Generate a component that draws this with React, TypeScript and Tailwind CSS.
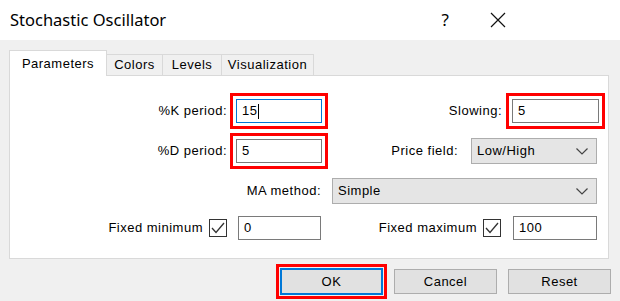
import React from 'react';

const labelCls = 'text-[13px] text-black text-right whitespace-nowrap';

function TextBox({ value, focused, width }: { value: string; focused?: boolean; width: string }) {
  return (
    <div
      className={`${width} h-[24px] bg-white flex items-center pl-[5px] text-[13px] border ${
        focused ? 'border-[#0078d7]' : 'border-[#7a7a7a]'
      }`}
    >
      <span>{value}</span>
      {focused && <span className="ml-px w-px h-[15px] bg-black" />}
    </div>
  );
}

function Highlight({ children, width }: { children: React.ReactNode; width: string }) {
  return <div className={`${width} h-[36px] border-[3px] border-[#ff0000] p-[3px] flex`}>{children}</div>;
}

function Chevron() {
  return (
    <svg width="12" height="7" viewBox="0 0 12 7" className="shrink-0">
      <polyline points="0.5,0.5 6,6 11.5,0.5" fill="none" stroke="#444" strokeWidth="1.2" />
    </svg>
  );
}

function Select({ value, width }: { value: string; width: string }) {
  return (
    <div className={`${width} h-[26px] bg-[#e5e5e5] border border-[#adadad] flex items-center pl-[5px] pr-[8px] text-[13px]`}>
      <span className="flex-1">{value}</span>
      <Chevron />
    </div>
  );
}

function CheckBox() {
  return (
    <div className="w-[18px] h-[18px] border-[1.5px] border-[#333] bg-white flex items-center justify-center">
      <svg width="14" height="12" viewBox="0 0 14 12">
        <polyline points="1,6 5,10.5 13,1" fill="none" stroke="#333" strokeWidth="1.3" />
      </svg>
    </div>
  );
}

function Tab({ label, active, width }: { label: string; active?: boolean; width: string }) {
  if (active) {
    return (
      <div className={`${width} h-[26px] bg-white border border-b-0 border-[#d9d9d9] flex items-center justify-center text-[13px] relative z-10 -mb-px`}>
        {label}
      </div>
    );
  }
  return (
    <div className={`${width} h-[21px] bg-[#f0f0f0] border border-b-0 border-[#d9d9d9] -ml-px flex items-center justify-center text-[13px]`}>
      {label}
    </div>
  );
}

export default function App() {
  return (
    <div
      className="w-[620px] h-[301px] bg-[#f0f0f0] overflow-hidden text-black tracking-[0.5px]"
      style={{ fontFamily: '"Liberation Sans", Arial, sans-serif' }}
    >
      <div className="h-[40px] bg-white flex items-center pl-[10px] tracking-normal">
        <span className="text-[16.5px] flex-1" style={{ fontFamily: '"Noto Sans", sans-serif' }}>
          Stochastic Oscillator
        </span>
        <span className="text-[17px] mr-[41px]" style={{ fontFamily: '"Noto Sans", sans-serif' }}>?</span>
        <svg width="16" height="16" viewBox="0 0 16 16" className="mr-[114px]">
          <path d="M1 1 L15 15 M15 1 L1 15" stroke="#111" strokeWidth="1.2" fill="none" />
        </svg>
      </div>

      <div className="ml-[9px] mt-[9px] flex items-end h-[26px]">
        <Tab label="Parameters" active width="w-[98px]" />
        <Tab label="Colors" width="w-[57px]" />
        <Tab label="Levels" width="w-[60px]" />
        <Tab label="Visualization" width="w-[93px]" />
      </div>

      <div className="ml-[9px] w-[600px] h-[184px] bg-white border border-[#d9d9d9] flex flex-col">
        <div className="mt-[17px] flex items-center">
          <div className={`${labelCls} w-[217px]`}>%K period:</div>
          <div className="ml-[3px]">
            <Highlight width="w-[98px]">
              <TextBox value="15" focused width="w-full" />
            </Highlight>
          </div>
          <div className={`${labelCls} w-[174px]`}>Slowing:</div>
          <div className="ml-[4px]">
            <Highlight width="w-[99px]">
              <TextBox value="5" width="w-full" />
            </Highlight>
          </div>
        </div>

        <div className="mt-[4px] flex items-center">
          <div className={`${labelCls} w-[217px]`}>%D period:</div>
          <div className="ml-[3px]">
            <Highlight width="w-[98px]">
              <TextBox value="5" width="w-full" />
            </Highlight>
          </div>
          <div className={`${labelCls} w-[130px]`}>Price field:</div>
          <div className="ml-[13px]">
            <Select value="Low/High" width="w-[126px]" />
          </div>
        </div>

        <div className="mt-[9px] flex items-center">
          <div className={`${labelCls} w-[311px]`}>MA method:</div>
          <div className="ml-[11px]">
            <Select value="Simple" width="w-[265px]" />
          </div>
        </div>

        <div className="mt-[12px] flex items-center">
          <div className={`${labelCls} w-[193px]`}>Fixed minimum</div>
          <div className="ml-[6px]">
            <CheckBox />
          </div>
          <div className="ml-[11px]">
            <TextBox value="0" width="w-[83px]" />
          </div>
          <div className={`${labelCls} w-[156px]`}>Fixed maximum</div>
          <div className="ml-[6px]">
            <CheckBox />
          </div>
          <div className="ml-[12px]">
            <TextBox value="100" width="w-[84px]" />
          </div>
        </div>
      </div>

      <div className="mt-[5px] ml-[276px] flex items-center">
        <div className="w-[111px] h-[35px] border-[3px] border-[#ff0000] p-px">
          <button className="w-full h-full bg-[#e1e1e1] border-2 border-[#0078d7] text-[13px]">OK</button>
        </div>
        <button className="ml-[7px] w-[103px] h-[25px] bg-[#e1e1e1] border border-[#adadad] text-[13px]">Cancel</button>
        <button className="ml-[11px] w-[103px] h-[25px] bg-[#e1e1e1] border border-[#adadad] text-[13px]">Reset</button>
      </div>
    </div>
  );
}
